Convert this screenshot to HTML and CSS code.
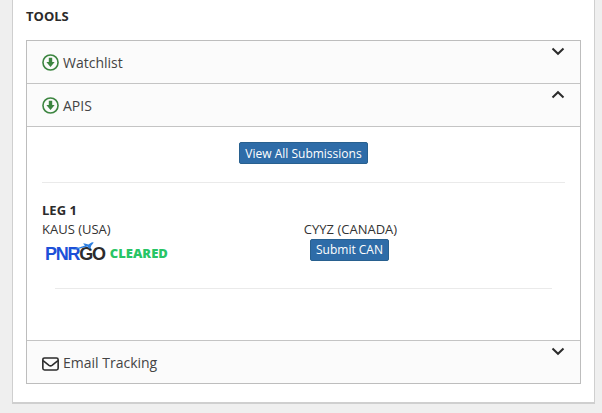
FILE: index.html
```html
<!DOCTYPE html>
<html lang="en">
<head>
<meta charset="utf-8">
<title>Tools</title>
<link rel="stylesheet" href="styles.css">
</head>
<body>
<main class="card">
  <h2 class="title">TOOLS</h2>
  <div class="accordion">
    <div class="row">
      <svg class="icon" viewBox="0 0 16 16"><circle cx="8" cy="8" r="7.1" fill="none" stroke="#3c8540" stroke-width="1.5"/><path d="M6.4 3.6h3.2v4h2.3L8 12.2 4.1 7.6h2.3z" fill="#3c8540"/></svg>
      <span class="label">Watchlist</span>
      <svg class="chev" viewBox="0 0 14 9"><path d="M1.5 1.5 7 6.8l5.5-5.3" fill="none" stroke="#2b2b2b" stroke-width="2"/></svg>
    </div>
    <div class="row">
      <svg class="icon" viewBox="0 0 16 16"><circle cx="8" cy="8" r="7.1" fill="none" stroke="#3c8540" stroke-width="1.5"/><path d="M6.4 3.6h3.2v4h2.3L8 12.2 4.1 7.6h2.3z" fill="#3c8540"/></svg>
      <span class="label">APIS</span>
      <svg class="chev" viewBox="0 0 14 9"><path d="M1.5 7.5 7 2.2l5.5 5.3" fill="none" stroke="#2b2b2b" stroke-width="2"/></svg>
    </div>
    <section class="panel">
      <div class="panel-top"><button class="btn btn-wide">View All Submissions</button></div>
      <hr class="rule">
      <h3 class="leg">LEG 1</h3>
      <div class="route">
        <div class="col">
          <div class="place">KAUS (USA)</div>
          <div class="status">
            <span class="logo"><span class="pnr">PNR</span><span class="go">GO</span><svg class="plane" viewBox="0 0 24 10"><path d="M0 9.5 15 4.6 13 2.4h1.8L18.4 3.6 22 1.2l1.8.2-2.6 3.4L20.4 7.6H19L17.6 5.4 8 8z" fill="#2f7fe0"/></svg></span>
            <span class="cleared">CLEARED</span>
          </div>
        </div>
        <div class="col col-right">
          <div class="place">CYYZ (CANADA)</div>
          <button class="btn btn-sm">Submit CAN</button>
        </div>
      </div>
      <hr class="rule rule-inner">
    </section>
    <div class="row row-last">
      <svg class="icon mail" viewBox="0 0 16 13"><rect x=".8" y=".8" width="14.4" height="11.4" rx="1.6" fill="none" stroke="#2b2b2b" stroke-width="1.5"/><path d="M1 3.4 6.6 7.8c.8.6 2 .6 2.8 0L15 3.4" fill="none" stroke="#2b2b2b" stroke-width="1.5"/></svg>
      <span class="label">Email Tracking</span>
      <svg class="chev" viewBox="0 0 14 9"><path d="M1.5 1.5 7 6.8l5.5-5.3" fill="none" stroke="#2b2b2b" stroke-width="2"/></svg>
    </div>
  </div>
</main>
</body>
</html>
```
FILE: styles.css
```css
html, body { margin: 0; height: 413px; overflow: hidden; }
body { background: #efefef; font-family: "Open Sans", sans-serif; color: #333; padding: 0 7px 0 12px; box-sizing: border-box; }
.card { box-sizing: border-box; height: 404px; background: #fff; border: 1px solid #cfcfcf; border-top: 0; border-bottom-width: 2px; padding: 9px 13px 0 13px; }
.title { margin: 0; font-size: 13px; line-height: 14px; font-weight: 700; color: #2b2b2b; height: 31px; }
.accordion { border: 1px solid #bdbdbd; }
.row { position: relative; box-sizing: border-box; height: 43px; display: flex; align-items: center; gap: 4px; padding: 0 15px; background: #fbfbfb; border-bottom: 1px solid #c4c4c4; }
.row-last { border-bottom: 0; height: 43px; border-top: 1px solid #c4c4c4; }
.icon { width: 17px; height: 17px; flex: none; margin-top: 1px; }
.mail { height: 14px; margin-top: 3px; }
.label { font-size: 14px; line-height: 20px; color: #444; margin-top: 2px; }
.chev { position: absolute; right: 15px; top: 6px; width: 14px; height: 9px; }
.panel { box-sizing: border-box; height: 213px; padding: 15px 15px 0; background: #fff; }
.panel-top { display: flex; justify-content: center; }
.btn { font-family: inherit; font-size: 12px; line-height: 16px; color: #fff; background: #2e6ca8; border: 1px solid #28608f; border-radius: 2px; padding: 2px 5.5px; height: 22px; }
.btn-wide { padding-top: 3px; padding-bottom: 1px; }
.btn-sm { padding: 2px 5px; margin-right: 2px; flex: none; }
.rule { border: 0; border-top: 1px solid #eaeaea; margin: 18px 0 0; }
.leg { margin: 18px 0 0; font-size: 13px; line-height: 19px; font-weight: 700; color: #2b2b2b; }
.route { display: grid; grid-template-columns: 262px 1fr; height: 68px; }
.col { min-width: 0; }
.col-right { display: flex; flex-direction: column; align-items: center; width: 93px; }
.place { font-size: 13px; line-height: 19px; color: #333; white-space: nowrap; }
.status { display: flex; align-items: center; gap: 5px; margin-top: 4px; height: 20px; }
.logo { position: relative; display: inline-flex; margin: 3px 0 0 3px; font-family: "Liberation Sans", sans-serif; font-weight: 700; font-size: 18px; line-height: 17px; letter-spacing: -1.25px; }
.pnr { color: #1d50d8; }
.go { color: #2c2c2c; }
.plane { position: absolute; left: 25px; top: -5px; width: 24px; height: 10px; }
.cleared { font-size: 13px; line-height: 14px; font-weight: 800; color: #28c566; margin-left: 0; margin-top: -1px; }
.rule-inner { margin: 0 13px; }
```
